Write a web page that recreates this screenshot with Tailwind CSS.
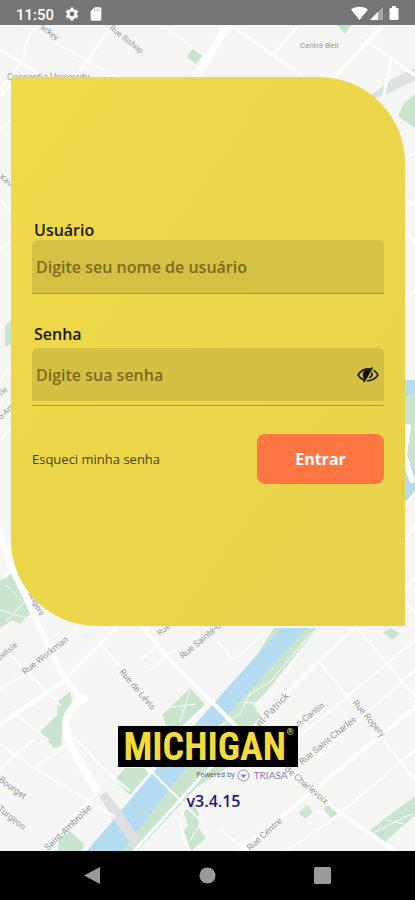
<!DOCTYPE html>
<html lang="pt-BR">
<head>
  <meta charset="UTF-8">
  <meta name="viewport" content="width=device-width, initial-scale=1.0">
  <title>Michigan - Login</title>
  <script src="https://cdn.jsdelivr.net/npm/@tailwindcss/browser@4"></script>
</head>
<body class="min-h-screen flex flex-col bg-black font-['Open_Sans',sans-serif]">

  <!-- barra de status -->
  <header class="h-[25px] shrink-0 bg-[#757575] text-white flex items-center px-4">
    <span class="pt-1 font-['Roboto',sans-serif] font-medium text-[15px] leading-5">11:50</span>
    <svg class="ml-[10px] mt-[2px] size-4" viewBox="0 0 24 24" fill="currentColor"><path d="M19.14 12.94c.04-.3.06-.61.06-.94 0-.32-.02-.64-.07-.94l2.03-1.58a.49.49 0 0 0 .12-.61l-1.92-3.32a.49.49 0 0 0-.59-.22l-2.39.96a7 7 0 0 0-1.62-.94l-.36-2.54a.48.48 0 0 0-.48-.41h-3.84a.48.48 0 0 0-.47.41l-.36 2.54c-.59.24-1.13.57-1.62.94l-2.39-.96a.48.48 0 0 0-.59.22L2.74 8.87a.48.48 0 0 0 .12.61l2.03 1.58c-.05.3-.09.63-.09.94s.02.64.07.94l-2.03 1.58a.49.49 0 0 0-.12.61l1.92 3.32c.12.22.37.29.59.22l2.39-.96c.5.38 1.03.7 1.62.94l.36 2.54c.05.24.24.41.48.41h3.84c.24 0 .44-.17.47-.41l.36-2.54a7 7 0 0 0 1.62-.94l2.39.96c.22.08.47 0 .59-.22l1.92-3.32a.48.48 0 0 0-.12-.61zM12 15.6a3.6 3.6 0 1 1 0-7.2 3.6 3.6 0 0 1 0 7.2z"/></svg>
    <svg class="ml-2 mt-[2px] size-4" viewBox="0 0 24 24" fill="currentColor"><path d="M18 2h-8L4 8v12c0 1.100.900 2 2 2h12c1.100 0 2-.9 2-2V4c0-1.100-.9-2-2-2z"/><path d="M9 5h2v3H9zM13 4h1.500v4H13zM16 4h1.500v4H16z" fill="#b5b5b5"/></svg>
    <svg class="ml-auto w-[17px] h-4" viewBox="0 0 17 16" fill="currentColor"><path d="M0 4.500C4.500.8 12.500.8 17 4.500L8.500 15z"/></svg>
    <svg class="ml-[2px] w-[13px] h-4" viewBox="0 0 13 16"><path d="M0 15 13 2v13z" fill="#a8a8a8"/><path d="M0 15 8 7v8z" fill="#fff"/></svg>
    <svg class="ml-[6px] w-[10px] h-4" viewBox="0 0 10 16" fill="currentColor"><path d="M3 1h4v2h1.500q1 0 1 1v10q0 1-1 1h-7q-1 0-1-1V4q0-1 1-1H3z"/></svg>
  </header>

  <main class="relative isolate grow overflow-hidden flex flex-col bg-[#f5f5f4]">

    <!-- mapa de fundo -->
    <svg class="absolute inset-0 -z-10 w-full h-full" viewBox="0 25 415 826" preserveAspectRatio="xMidYMid slice" aria-hidden="true">
      <g fill="#c9e4cf">
        <path d="M193 48l10 7-7 9-9-7zM337 25h14l-6 9zM415 94l-11 9-6 13 17 12zM11 320l-6 6v21l6-3z"/>
        <path d="M0 581l13-9 17 42-10 10-8-4-12 8zM405 395l10-3v100l-10-12z"/>
        <path d="M70 692l-12 9-1 14-17 17 14 16 7-3 2-20 4-15 5-9zM162 715l28-27 17 19-24 20h-16z"/>
        <path d="M274 628h43l-50 63-14 14 10 15-30 44-36 23-60 64h-30l50-70 60-70 30-40zM115 780l10-12h20l3 6-18 21zM59 838l11-7 15 14-4 6H58z"/>
        <path d="M183 833l5-8-4-12 8-12 7 12-1 14 8 11-15 13zM370 830l45-34v19l-30 27zM299 813l8-8 6 7-8 7zM323 808l10-5 7 9-9 6zM383 632l8-4 8 6-7 6z"/>
      </g>
      <g fill="#b4dbef">
        <path d="M281 628h25l-50 56-29 31-41 53-64 83H87l70-83 56-64zM405 380h10v12l-10 5zM405 458l10 12v20l-10 12z"/>
      </g>
      <path d="M370 96l22-17 23-11v12l-25 13-28 10z" fill="#dde1e1"/>
      <path d="M99 796l7-4 11 13 24 35-7 9-22-32z" fill="#dedfe0"/>

      <!-- ruas -->
      <g fill="none" stroke="#fff" stroke-linecap="round" stroke-linejoin="round">
        <path stroke-width="8" d="M230 22l-36 58M84 698q-18 12-18 28 1 20 30 62"/>
        <path stroke-width="6" d="M-4 520l15 46 51 108 20 26M412 480l-8-25 4-28"/>
        <path stroke-width="4" d="M386 22l-54 58M0 725l62-43 54-54M142 627l31 36 62 62M418 705l-98 80-80 66M293 770l47 43 52 36M0 96l11-11M5 576l8-8"/>
        <path stroke-width="3" d="M355 628l-35 32-68 68-52 50-66 73M182 728l30-28M232 26l68 48M300 24l-26 30M366 40l50 36M0 50l46 28M110 28L65 92M384 94l7-34"/>
        <path stroke-width="2" d="M37 26q-14 14-13 32L0 90M55 42l66 38M160 24l45 32M0 690l38-24 40-38M100 644l46 50M140 660l20-18M150 670l24-20M14 712l34 28M0 744l34 24 80 48M10 655l50 50M35 768l40-30 34 36 20 16M0 770l14-14 18-15M60 830l40-40M356 626l60 72M318 660l60 74 36 44M290 692l-30 30M415 640l-120 100M415 670l-98 88M415 750l-78 66-50 35M220 830l30 24M178 818l14 40M150 770l50 50M235 660l28-26M218 642l14 16M0 130l11-10M0 200l11 12M0 250l11-10M0 380l11-14M0 440l11-12M405 160l10-9M405 210l10-10M405 230l10 12M405 300l10-10M405 540l10-14M405 590l10-12M405 600l10 14M312 810l12 4"/>
        <path stroke-width="1" d="M312 632l-42 50-20 12-10 20-20 12M300 652l-36 52-20-2M0 610l26 8M6 585l18 18-18 18M166 708l30-4M190 690l-10 32M375 832l36-18M386 820l18 4M190 840l14-22"/>
      </g>

      <!-- nomes das ruas -->
      <g fill="#9a9a9a" font-family="Roboto, sans-serif" font-size="8">
        <text transform="translate(40 28) rotate(38)">ackey</text>
        <text transform="translate(109 29) rotate(38)">Rue Bishop</text>
        <text x="300" y="48">Centre Bell</text>
        <text x="7" y="80" font-size="9">Concordia University</text>
        <text transform="translate(-1 178) rotate(38)">Kau</text>
        <text transform="translate(1 396) rotate(-38)">rie</text>
        <text transform="translate(1 420) rotate(-45)">o-Ang</text>
        <text transform="translate(28 594) rotate(62)">Angers</text>
        <text transform="translate(-5 665) rotate(-40)">e Delisle</text>
        <text transform="translate(25 675) rotate(-38)" font-size="9">Rue Workman</text>
        <text transform="translate(119 672) rotate(50)" font-size="9">Rue de Lévis</text>
        <text transform="translate(160 636) rotate(-38)">Rue Quesnel</text>
        <text transform="translate(183 659) rotate(-40)" font-size="9">Rue Sainte-Cun</text>
        <text transform="translate(260 727) rotate(-46)" font-size="10">nt-Patrick</text>
        <text transform="translate(299 727) rotate(-38)" font-size="9">n-Cantin</text>
        <text transform="translate(352 703) rotate(50)" font-size="9">Rue Ropery</text>
        <text transform="translate(302 765) rotate(-39)" font-size="9">Rue Saint-Charles</text>
        <text transform="translate(284 770) rotate(40)" font-size="9">de Charlevoix</text>
        <text transform="translate(250 851) rotate(-42)" font-size="9">Rue Centre</text>
        <text transform="translate(-2 781) rotate(36)" font-size="9">Bourget</text>
        <text transform="translate(-3 810) rotate(38)" font-size="9">Turgeon</text>
        <text transform="translate(48 851) rotate(-44)" font-size="9">Saint-Ambroise</text>
      </g>
    </svg>

    <form class="mt-13 ml-[11px] mr-[10px] px-[21px] pt-[143px] pb-[142px] rounded-tr-[86px] rounded-bl-[86px] bg-linear-to-br from-[#efda49] to-[#e8d24b]">
      <label for="usuario" class="block pl-[2px] text-base leading-5 font-semibold text-[#1c1803]">Usuário</label>
      <div class="border-b border-[#9d9872]">
        <input id="usuario" type="text" placeholder="Digite seu nome de usuário" class="block w-full h-[53px] px-1 rounded-t-md bg-[#d5c143] text-base font-semibold text-[#1c1803] placeholder:text-[#7b6b20] outline-none">
      </div>

      <label for="senha" class="block mt-[30px] pl-[2px] text-base leading-5 font-semibold text-[#1c1803]">Senha</label>
      <div class="mt-1 pb-1 border-b border-[#9d9872]">
        <div class="flex items-center pr-1 rounded-t-md bg-[#d4c043]">
          <input id="senha" type="password" placeholder="Digite sua senha" class="grow min-w-0 h-[53px] px-1 text-base font-semibold text-[#1c1803] placeholder:text-[#7b6b20] outline-none">
          <button type="button" aria-label="Mostrar senha" class="shrink-0">
            <svg class="w-6 h-5" viewBox="0 0 24 20" fill="none" stroke="#151203" stroke-width="1.600" stroke-linecap="round" stroke-linejoin="round">
              <path d="M15 4.200Q7 2.500 2 10q2.500 3.500 5.500 4.800"/>
              <path d="M18 5.600q2.600 1.600 4 4.400-4 5.600-10.500 5.700"/>
              <path d="M16 3 8 16.500"/>
              <path d="M14 5 8.800 13.500Q6 9 9 6z" fill="#151203"/>
              <path d="M15.800 8q1 3-2.300 4.500"/>
            </svg>
          </button>
        </div>
      </div>

      <div class="mt-7 flex items-center justify-between">
        <a href="#" class="text-[13px] leading-5 text-[#4b4215]">Esqueci minha senha</a>
        <button type="submit" class="w-[127px] h-[50px] rounded-lg bg-[#ff7643] text-white text-base font-bold">Entrar</button>
      </div>
    </form>

    <div class="mt-auto pb-10 pt-10 flex flex-col items-center">
      <div class="w-[180px]">
        <div class="h-[41px] pl-[6px] pr-1 flex items-center justify-between bg-black text-[#f2dc3c] font-['Liberation_Sans_Narrow','Roboto_Condensed','Liberation_Sans',sans-serif] font-bold text-[38px] leading-10">
          MICHIGAN
          <span class="self-start text-[9px] leading-3">®</span>
        </div>
        <div class="h-4 pr-[10px] flex items-center justify-end gap-[2px]">
          <span class="text-[7px] leading-4 text-[#555]">Powered by</span>
          <svg class="size-[13px]" viewBox="0 0 13 13" fill="none" stroke="#8f8fc9"><circle cx="6.500" cy="6.500" r="5.500"/><path d="M3.500 5 6.500 9l3-4-3 1z" fill="#6f6fba" stroke="none"/></svg>
          <span class="pl-[2px] font-['Lato',sans-serif] text-[10px] leading-4 text-[#7f7fb5]">TRIASA</span>
        </div>
      </div>
      <p class="mt-2 pl-3 text-base leading-5 font-semibold text-[#1d1a78]">v3.4.15</p>
    </div>
  </main>

  <!-- barra de navegação -->
  <nav class="h-[49px] shrink-0 bg-black text-[#9a9a9a] flex items-center justify-center gap-[98px]">
    <button type="button" aria-label="Voltar"><svg class="size-[17px]" viewBox="0 0 17 17" fill="currentColor"><path d="M0 8.500 16 0v17z"/></svg></button>
    <button type="button" aria-label="Início"><svg class="size-[17px]" viewBox="0 0 17 17" fill="currentColor"><circle cx="8.500" cy="8.500" r="8"/></svg></button>
    <button type="button" aria-label="Recentes"><svg class="size-[17px]" viewBox="0 0 17 17" fill="currentColor"><rect width="17" height="17" rx="1.500"/></svg></button>
  </nav>

</body>
</html>
